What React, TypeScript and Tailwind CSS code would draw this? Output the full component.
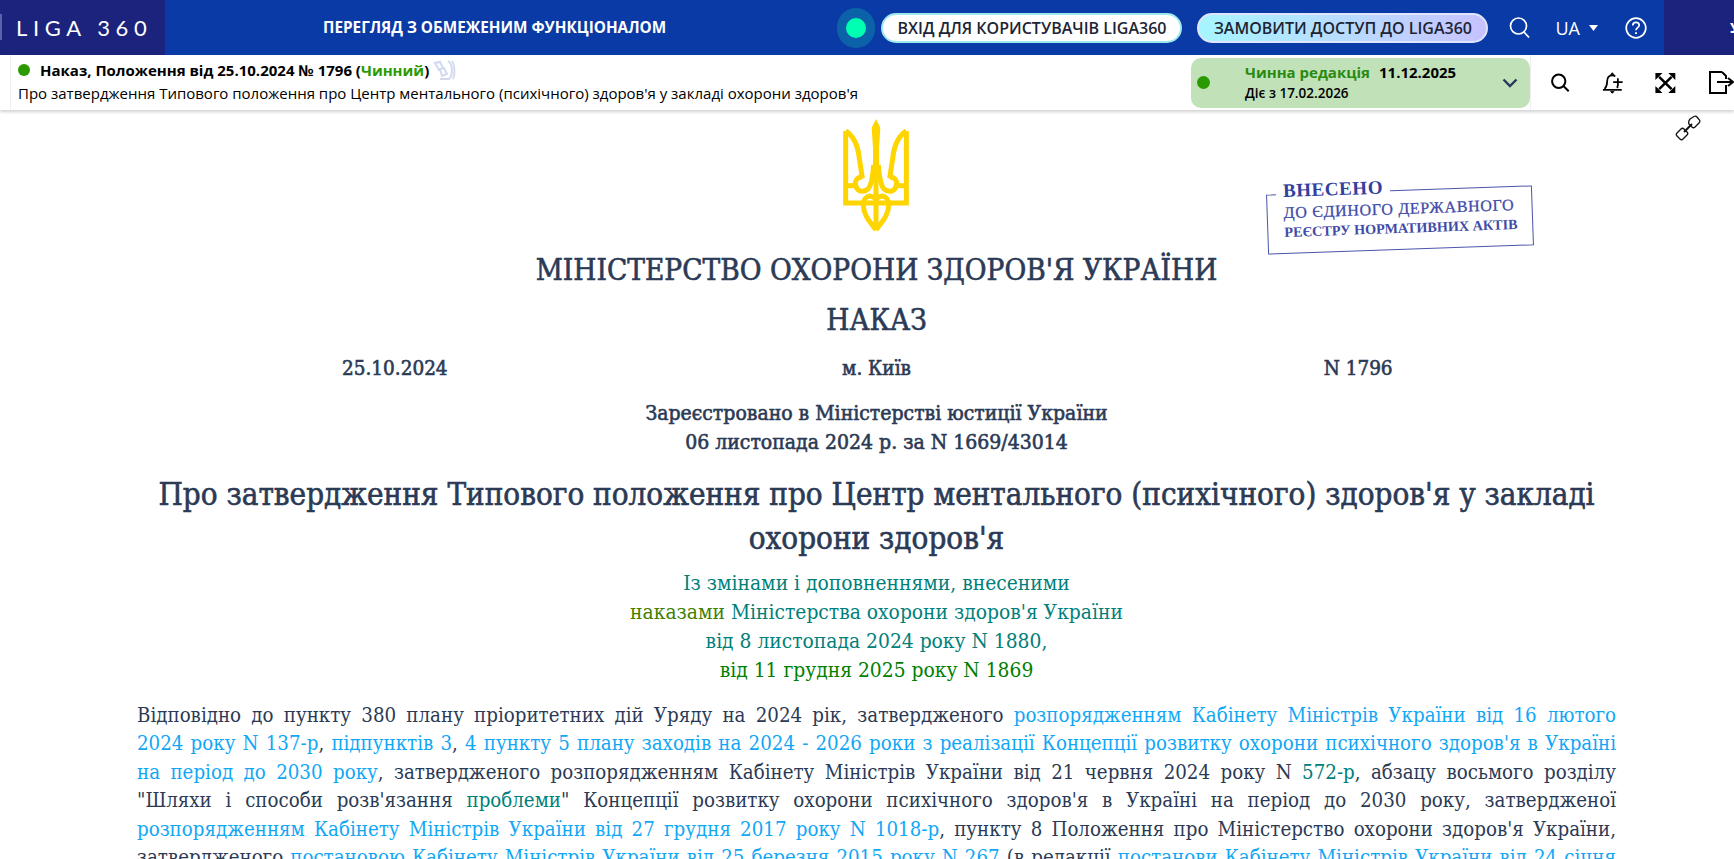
const SERIF = "font-['DejaVu_Serif_Condensed','DejaVu_Serif',serif]";

function TridentSide() {
  return (
    <>
      <path d="M47 48V264H105" />
      <path d="M47 48C75 65 84 95 88 130L97 190" />
      <path d="M47 212H75" />
      <path d="M97 186C80 186 72 200 78 215C84 232 102 232 114 222C122 214 128 190 131 150" />
      <path d="M138 252C120 235 100 245 100 270C100 300 120 320 138 345" />
    </>
  );
}

function Trident() {
  return (
    <svg width="95" height="120" viewBox="0 0 285 360" className="absolute left-[830px] top-[115px]">
      <g fill="none" stroke="#ffd500" strokeWidth="15">
        <TridentSide />
        <g transform="matrix(-1 0 0 1 276 0)">
          <TridentSide />
        </g>
        <path d="M138 200V340" />
        <path d="M105 264H171" />
      </g>
      <path d="M138 12L151 38L147 100L147 195L138 215L129 195L129 100L125 38Z" fill="#ffd500" />
    </svg>
  );
}

function Stamp() {
  return (
    <div className="absolute left-[1267px] top-[190px] h-[60px] w-[266px] -rotate-2 border-[1.5px] border-[#4a55ab] pl-[16px] pt-[8px] font-['Liberation_Serif',serif] text-[#3f4ba8]">
      <div className="absolute -top-[16px] left-[9px] bg-white px-[7px] text-[19px] font-bold leading-[23px] tracking-[0.6px] text-[#333f9f]">
        ВНЕСЕНО
      </div>
      <div className="text-[16px] leading-[20px] tracking-[0.7px] whitespace-nowrap [-webkit-text-stroke:0.3px]">ДО ЄДИНОГО ДЕРЖАВНОГО</div>
      <div className="text-[14.2px] font-bold leading-[19px] whitespace-nowrap">РЕЄСТРУ НОРМАТИВНИХ АКТІВ</div>
    </div>
  );
}

function BarIcons() {
  return (
    <div className="flex h-full w-[204px] shrink-0 items-center overflow-hidden border-l border-[#eeeeee] pl-[19px] text-black">
      <svg width="25" height="25" viewBox="0 0 24 24" fill="none" stroke="currentColor" strokeWidth="2.4">
        <circle cx="10.5" cy="10.5" r="8" />
        <path d="M16.5 16.5L22.5 22.5" />
      </svg>
      <svg width="28" height="28" viewBox="0 0 26 26" fill="none" stroke="currentColor" strokeWidth="2" className="ml-[32px]">
        <path d="M3 20C6 17 6 14 6 11C6 6 9 4 12 4C13.5 4 14.5 4.4 15.5 5.2" />
        <path d="M1 21H23" />
        <path d="M18 16V19" />
        <path d="M12 1L10 3.5H14Z" fill="currentColor" strokeWidth="1" />
        <path d="M12 25L10 23H14Z" fill="currentColor" strokeWidth="1" />
        <path d="M13 12H24M18.5 7.5V16.5" />
      </svg>
      <svg width="26" height="26" viewBox="0 0 25 25" fill="none" stroke="currentColor" strokeWidth="3" className="ml-[31px]">
        <path d="M5 5L20 20M20 5L5 20" />
        <path d="M0.5 0.5H9L0.5 9ZM24.5 0.5H16L24.5 9ZM0.5 24.5H9L0.5 16ZM24.5 24.5H16L24.5 16Z" fill="currentColor" stroke="none" />
      </svg>
      <svg width="26" height="24" viewBox="0 0 26 24" fill="none" stroke="currentColor" strokeWidth="2" className="ml-[32px] shrink-0">
        <path d="M14 1H2V22H18V14" />
        <path d="M14 1L18 5V8" />
        <path d="M9 11H24M20 7L25 11L20 15" />
      </svg>
    </div>
  );
}

const a = "text-[#12a7f5]";
const line = "block [text-align-last:justify] whitespace-nowrap";

export default function App() {
  return (
    <div className="relative h-[859px] w-[1734px] overflow-hidden bg-white font-['Open_Sans',sans-serif]">
      <header className="flex h-[55px] items-center bg-[#0a3aa6] text-white">
        <div className="relative flex h-full w-[165px] shrink-0 items-center bg-[#1b237d] pl-[16px] font-['Lato',sans-serif] text-[22px] leading-none tracking-[5.6px]">
          <span className="absolute left-0 top-[14px] h-[26px] w-[2px] bg-[#5a62a8]" />
          LIGA 360
        </div>
        <div className="ml-[158px] text-[15.3px] font-bold whitespace-nowrap">ПЕРЕГЛЯД З ОБМЕЖЕНИМ ФУНКЦІОНАЛОМ</div>
        <div className="ml-auto flex items-center">
          <div className="flex h-[40px] w-[38px] items-center justify-center rounded-full bg-[#0b62a8]">
            <div className="h-[20px] w-[20px] rounded-full bg-[#00ffb0]" />
          </div>
          <button className="ml-[6px] flex h-[30px] w-[301px] items-center justify-center rounded-full border-2 border-[#9ce9ee] bg-white text-[16px] font-semibold text-[#1d2433]">
            ВХІД ДЛЯ КОРИСТУВАЧІВ LIGA360
          </button>
          <button className="ml-[15px] flex h-[30px] w-[291px] items-center justify-center rounded-full border-2 border-[#dfe6fb] bg-gradient-to-r from-[#a6f5ff] to-[#c6c2ff] text-[16px] font-semibold text-[#1d2433]">
            ЗАМОВИТИ ДОСТУП ДО LIGA360
          </button>
          <svg width="21" height="21" viewBox="0 0 21 21" fill="none" stroke="currentColor" strokeWidth="1.7" className="ml-[21px]">
            <circle cx="9.5" cy="9" r="8" />
            <path d="M15 15L20 20.5" />
          </svg>
          <span className="ml-[25px] text-[18px] leading-none">UA</span>
          <svg width="9" height="6" viewBox="0 0 9 6" fill="currentColor" className="ml-[9px]">
            <path d="M0 0H9L4.5 6Z" />
          </svg>
          <svg width="22" height="22" viewBox="0 0 22 22" fill="none" stroke="currentColor" strokeWidth="1.7" className="ml-[27px]">
            <circle cx="11" cy="11" r="9.8" />
            <path d="M7.8 8.4C7.8 6.5 9.2 5.4 11 5.4C12.8 5.4 14.2 6.5 14.2 8.2C14.2 10.6 11 10.6 11 13.2" />
            <path d="M11 15.2V17" strokeWidth="2" />
          </svg>
        </div>
        <div className="ml-[17px] flex h-full w-[70px] shrink-0 items-center justify-end overflow-hidden bg-[#1b237d] text-[15px] font-bold">
          <span className="-mr-[6px]">У</span>
        </div>
      </header>

      <div className="relative z-10 flex h-[55px] items-center shadow-[0_2px_3px_rgba(0,0,0,0.18)]">
        <div className="ml-[10px] flex h-full min-w-0 flex-1 flex-col justify-center border-l border-[#f0f0f0] pb-[2px] pl-[7px] text-black">
          <div className="flex items-center text-[15px] font-bold leading-[20px] whitespace-nowrap">
            <span className="mr-[10px] h-[12px] w-[12px] rounded-full bg-[#2a9a00]" />
            Наказ, Положення від 25.10.2024 № 1796 (<span className="text-[#2a9a00]">Чинний</span>)
            <svg width="24" height="20" viewBox="0 0 24 20" fill="none" stroke="#d3daf0" strokeWidth="2" className="ml-[3px]">
              <path d="M16 1C21 4 21 15 17 19H8" />
              <path d="M20 1C23 5 23 15 21 19" />
              <path d="M3 3L8 2L11 8L7 10ZM8 9L12 8L15 14L10 16Z" />
            </svg>
          </div>
          <div className="mt-[3px] text-[15px] leading-[20px] whitespace-nowrap">
            Про затвердження Типового положення про Центр ментального (психічного) здоров'я у закладі охорони здоров'я
          </div>
        </div>
        <div className="flex h-[50px] w-[339px] shrink-0 items-center rounded-[10px] bg-[#c1e1b8] pl-[6px] pr-[12px] text-black">
          <span className="h-[13px] w-[13px] rounded-full bg-[#2a9a00]" />
          <div className="ml-[35px] flex-1">
            <div className="text-[15px] font-bold leading-[22px]">
              <span className="text-[#2a8a10]">Чинна редакція</span>
              <span className="ml-[9px]">11.12.2025</span>
            </div>
            <div className="text-[13.5px] font-semibold leading-[21px]">Діє з 17.02.2026</div>
          </div>
          <svg width="16" height="10" viewBox="0 0 16 10" fill="none" stroke="#26395c" strokeWidth="2.4">
            <path d="M1.5 1.5L8 8L14.5 1.5" />
          </svg>
        </div>
        <BarIcons />
      </div>

      <Trident />
      <Stamp />
      <svg width="26" height="26" viewBox="0 0 26 26" fill="none" stroke="#111111" strokeWidth="1.3" className="absolute left-[1675px] top-[115px]">
        <path d="M15 4L19 1.5C20 1 21 1 22 2L24.5 5C25 6 25 7 24 8L20 12C19 13 18 13 17 12L14 9C13.5 8 13.5 6 15 4Z" />
        <path d="M6 14L2 18C1 19 1 20 2 21L5 24C6 25 7 25 8 24L12 20C13 19 13 18 12 17L9 14C8 13 7 13 6 14Z" />
        <path d="M9 17L17 9" strokeWidth="2" />
      </svg>

      <main className={`absolute left-[137px] top-[110px] w-[1479px] text-[#2b3a55] ${SERIF}`}>
        <h1 className="mt-[140px] text-center text-[29.5px] leading-[40px] [-webkit-text-stroke:0.6px]">МІНІСТЕРСТВО ОХОРОНИ ЗДОРОВ'Я УКРАЇНИ</h1>
        <h2 className="mt-[10px] text-center text-[29.5px] leading-[40px] [-webkit-text-stroke:0.6px]">НАКАЗ</h2>
        <div className="mt-[14px] grid grid-cols-3 px-[17px] text-center text-[20.5px] leading-[28px] [-webkit-text-stroke:0.6px]">
          <span>25.10.2024</span>
          <span>м. Київ</span>
          <span>N 1796</span>
        </div>
        <div className="mt-[17px] text-center text-[21px] leading-[29px] [-webkit-text-stroke:0.6px]">
          <div>Зареєстровано в Міністерстві юстиції України</div>
          <div>06 листопада 2024 р. за N 1669/43014</div>
        </div>
        <h3 className="mt-[15px] text-center text-[31.1px] leading-[44px] [-webkit-text-stroke:0.6px]">
          <div>Про затвердження Типового положення про Центр ментального (психічного) здоров'я у закладі</div>
          <div>охорони здоров'я</div>
        </h3>
        <div className="mt-[9px] text-center text-[20.8px] leading-[29px] text-[#00807a]">
          <div>Із змінами і доповненнями, внесеними</div>
          <div><span className="text-[#3f8000]">наказами</span> Міністерства охорони здоров'я України</div>
          <div>від 8 листопада 2024 року N 1880,</div>
          <div className="text-[#008000]">від 11 грудня 2025 року N 1869</div>
        </div>
        <p className="mt-[16px] text-[20.3px] leading-[28.4px]">
          <span className={line}>Відповідно до пункту 380 плану пріоритетних дій Уряду на 2024 рік, затвердженого <span className={a}>розпорядженням Кабінету Міністрів України від 16 лютого</span></span>
          <span className={line}><span className={a}>2024 року N 137-р</span>, <span className={a}>підпунктів 3</span>, <span className={a}>4 пункту 5 плану заходів на 2024 - 2026 роки з реалізації Концепції розвитку охорони психічного здоров'я в Україні</span></span>
          <span className={line}><span className={a}>на період до 2030 року</span>, затвердженого розпорядженням Кабінету Міністрів України від 21 червня 2024 року N <span className="text-[#00807a]">572-р</span>, абзацу восьмого розділу</span>
          <span className={line}>"Шляхи і способи розв'язання <span className="text-[#00807a]">проблеми</span>" Концепції розвитку охорони психічного здоров'я в Україні на період до 2030 року, затвердженої</span>
          <span className={line}><span className={a}>розпорядженням Кабінету Міністрів України від 27 грудня 2017 року N 1018-р</span>, пункту 8 Положення про Міністерство охорони здоров'я України,</span>
          <span className={line}>затвердженого <span className={a}>постановою Кабінету Міністрів України від 25 березня 2015 року N 267</span> (в редакції <span className={a}>постанови Кабінету Міністрів України від 24 січня</span></span>
        </p>
      </main>
    </div>
  );
}
